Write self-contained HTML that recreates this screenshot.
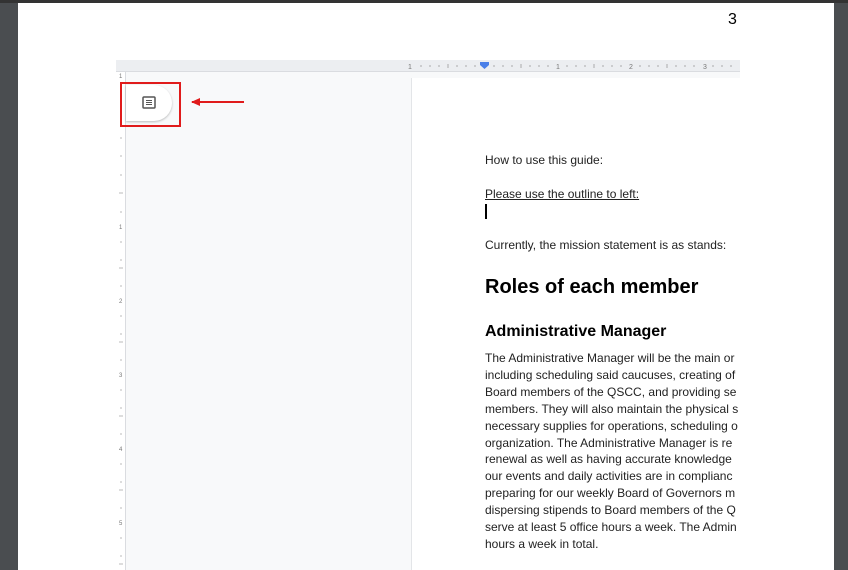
<!DOCTYPE html>
<html><head><style>
*{margin:0;padding:0;box-sizing:border-box}
body{width:848px;height:570px;overflow:hidden;background:#4a4d50;position:relative;font-family:"Liberation Sans",Arial,sans-serif}
#page{position:absolute;left:18px;top:3px;width:816px;height:567px;background:#fff}
#topbar{position:absolute;left:0;top:0;width:848px;height:3px;background:#333}
#pn{position:absolute;left:710px;top:8px;font-size:16px;color:#000}
#shot{position:absolute;left:116px;top:60px;width:624px;height:510px;overflow:hidden;background:#f8f9fa}
#hr{position:absolute;left:0;top:0;width:624px;height:12px;background:#eceef1;border-bottom:1px solid #dadce0}
#vr{position:absolute;left:0;top:12px;width:10px;height:498px;background:#fff;border-right:1px solid #dadce0}
#doc{position:absolute;left:295px;top:18px;width:340px;height:500px;background:#fff;border-left:1px solid #e3e5e8}
.t{position:absolute;left:73px;font-size:12px;color:#222;white-space:nowrap}
#body{position:absolute;left:73px;top:272px;font-size:12px;line-height:16.9px;color:#222;white-space:nowrap}
#btn{position:absolute;left:126px;top:85px;width:46px;height:36px;background:#fff;border-radius:0 18px 18px 0;box-shadow:0 1px 2px rgba(0,0,0,.25)}
#box{position:absolute;left:120px;top:82px;width:61px;height:45px;border:2px solid #e01b1b}
</style></head><body>
<div id="topbar"></div>
<div id="page"><div id="pn">3</div></div>
<div id="shot">
 <div id="hr">
  <svg width="624" height="12" style="position:absolute;left:0;top:0" font-family="Liberation Sans" font-size="7" fill="#777">
   <text x="292" y="9">1</text><text x="440" y="9">1</text><text x="513" y="9">2</text><text x="587" y="9">3</text>
   <g stroke="#aaa" stroke-width="1">
    <line x1="305" y1="5" x2="305" y2="7"/><line x1="314" y1="5" x2="314" y2="7"/><line x1="323" y1="5" x2="323" y2="7"/><line x1="332" y1="4" x2="332" y2="8"/><line x1="341" y1="5" x2="341" y2="7"/><line x1="350" y1="5" x2="350" y2="7"/><line x1="359" y1="5" x2="359" y2="7"/>
    <line x1="378" y1="5" x2="378" y2="7"/><line x1="387" y1="5" x2="387" y2="7"/><line x1="396" y1="5" x2="396" y2="7"/><line x1="405" y1="4" x2="405" y2="8"/><line x1="414" y1="5" x2="414" y2="7"/><line x1="423" y1="5" x2="423" y2="7"/><line x1="432" y1="5" x2="432" y2="7"/>
    <line x1="451" y1="5" x2="451" y2="7"/><line x1="460" y1="5" x2="460" y2="7"/><line x1="469" y1="5" x2="469" y2="7"/><line x1="478" y1="4" x2="478" y2="8"/><line x1="487" y1="5" x2="487" y2="7"/><line x1="496" y1="5" x2="496" y2="7"/><line x1="505" y1="5" x2="505" y2="7"/>
    <line x1="524" y1="5" x2="524" y2="7"/><line x1="533" y1="5" x2="533" y2="7"/><line x1="542" y1="5" x2="542" y2="7"/><line x1="551" y1="4" x2="551" y2="8"/><line x1="560" y1="5" x2="560" y2="7"/><line x1="569" y1="5" x2="569" y2="7"/><line x1="578" y1="5" x2="578" y2="7"/>
    <line x1="597" y1="5" x2="597" y2="7"/><line x1="606" y1="5" x2="606" y2="7"/><line x1="615" y1="5" x2="615" y2="7"/>
   </g>
   <rect x="364" y="2" width="9" height="3" fill="#4a7fe8"/><path d="M364 5h9l-4.5 4z" fill="#4a7fe8"/>
  </svg>
 </div>
 <div id="vr">
  <svg width="10" height="498" style="position:absolute;left:0;top:0" font-family="Liberation Sans" font-size="6" fill="#777">
   <text x="3" y="6">1</text>
   <text x="3" y="157">1</text><text x="3" y="231">2</text><text x="3" y="305">3</text><text x="3" y="379">4</text><text x="3" y="453">5</text>
   <g stroke="#bbb" stroke-width="1">
    <path d="M4 66h2M4 84h2M4 103h2M3 121h4M4 140h2M4 170h2M4 188h2M3 196h4M4 214h2M4 244h2M4 262h2M3 270h4M4 288h2M4 318h2M4 336h2M3 344h4M4 362h2M4 392h2M4 410h2M3 418h4M4 436h2M4 466h2M4 484h2M3 492h4"/>
   </g>
  </svg>
 </div>
 <div id="doc">
  <div class="t" style="top:75px">How to use this guide:</div>
  <div class="t" style="top:109px;text-decoration:underline">Please use the outline to left:</div>
  <div style="position:absolute;left:73px;top:126px;width:1.5px;height:15px;background:#000"></div>
  <div class="t" style="top:160px">Currently, the mission statement is as stands:</div>
  <div class="t" style="top:198px;font-size:20px;font-weight:bold;color:#000">Roles of each member</div>
  <div class="t" style="top:245px;font-size:16px;font-weight:bold;color:#000">Administrative Manager</div>
  <div id="body">The Administrative Manager will be the main or<br>including scheduling said caucuses, creating of<br>Board members of the QSCC, and providing se<br>members. They will also maintain the physical s<br>necessary supplies for operations, scheduling o<br>organization. The Administrative Manager is re<br>renewal as well as having accurate knowledge<br>our events and daily activities are in complianc<br>preparing for our weekly Board of Governors m<br>dispersing stipends to Board members of the Q<br>serve at least 5 office hours a week. The Admin<br>hours a week in total.</div>
 </div>
</div>
<div id="btn">
 <svg width="14" height="13" style="position:absolute;left:16px;top:11px" viewBox="0 0 14 13"><rect x="1" y="1" width="12" height="11" rx="1" fill="none" stroke="#555" stroke-width="1.5"/><path d="M4 4.5h6M4 6.5h6M4 8.5h6" stroke="#555" stroke-width="1"/></svg>
</div>
<div id="box"></div>
<svg width="60" height="10" style="position:absolute;left:190px;top:97px"><path d="M2 5h52" stroke="#e01b1b" stroke-width="2"/><path d="M1 5l9-4v8z" fill="#e01b1b"/></svg>
</body></html>
